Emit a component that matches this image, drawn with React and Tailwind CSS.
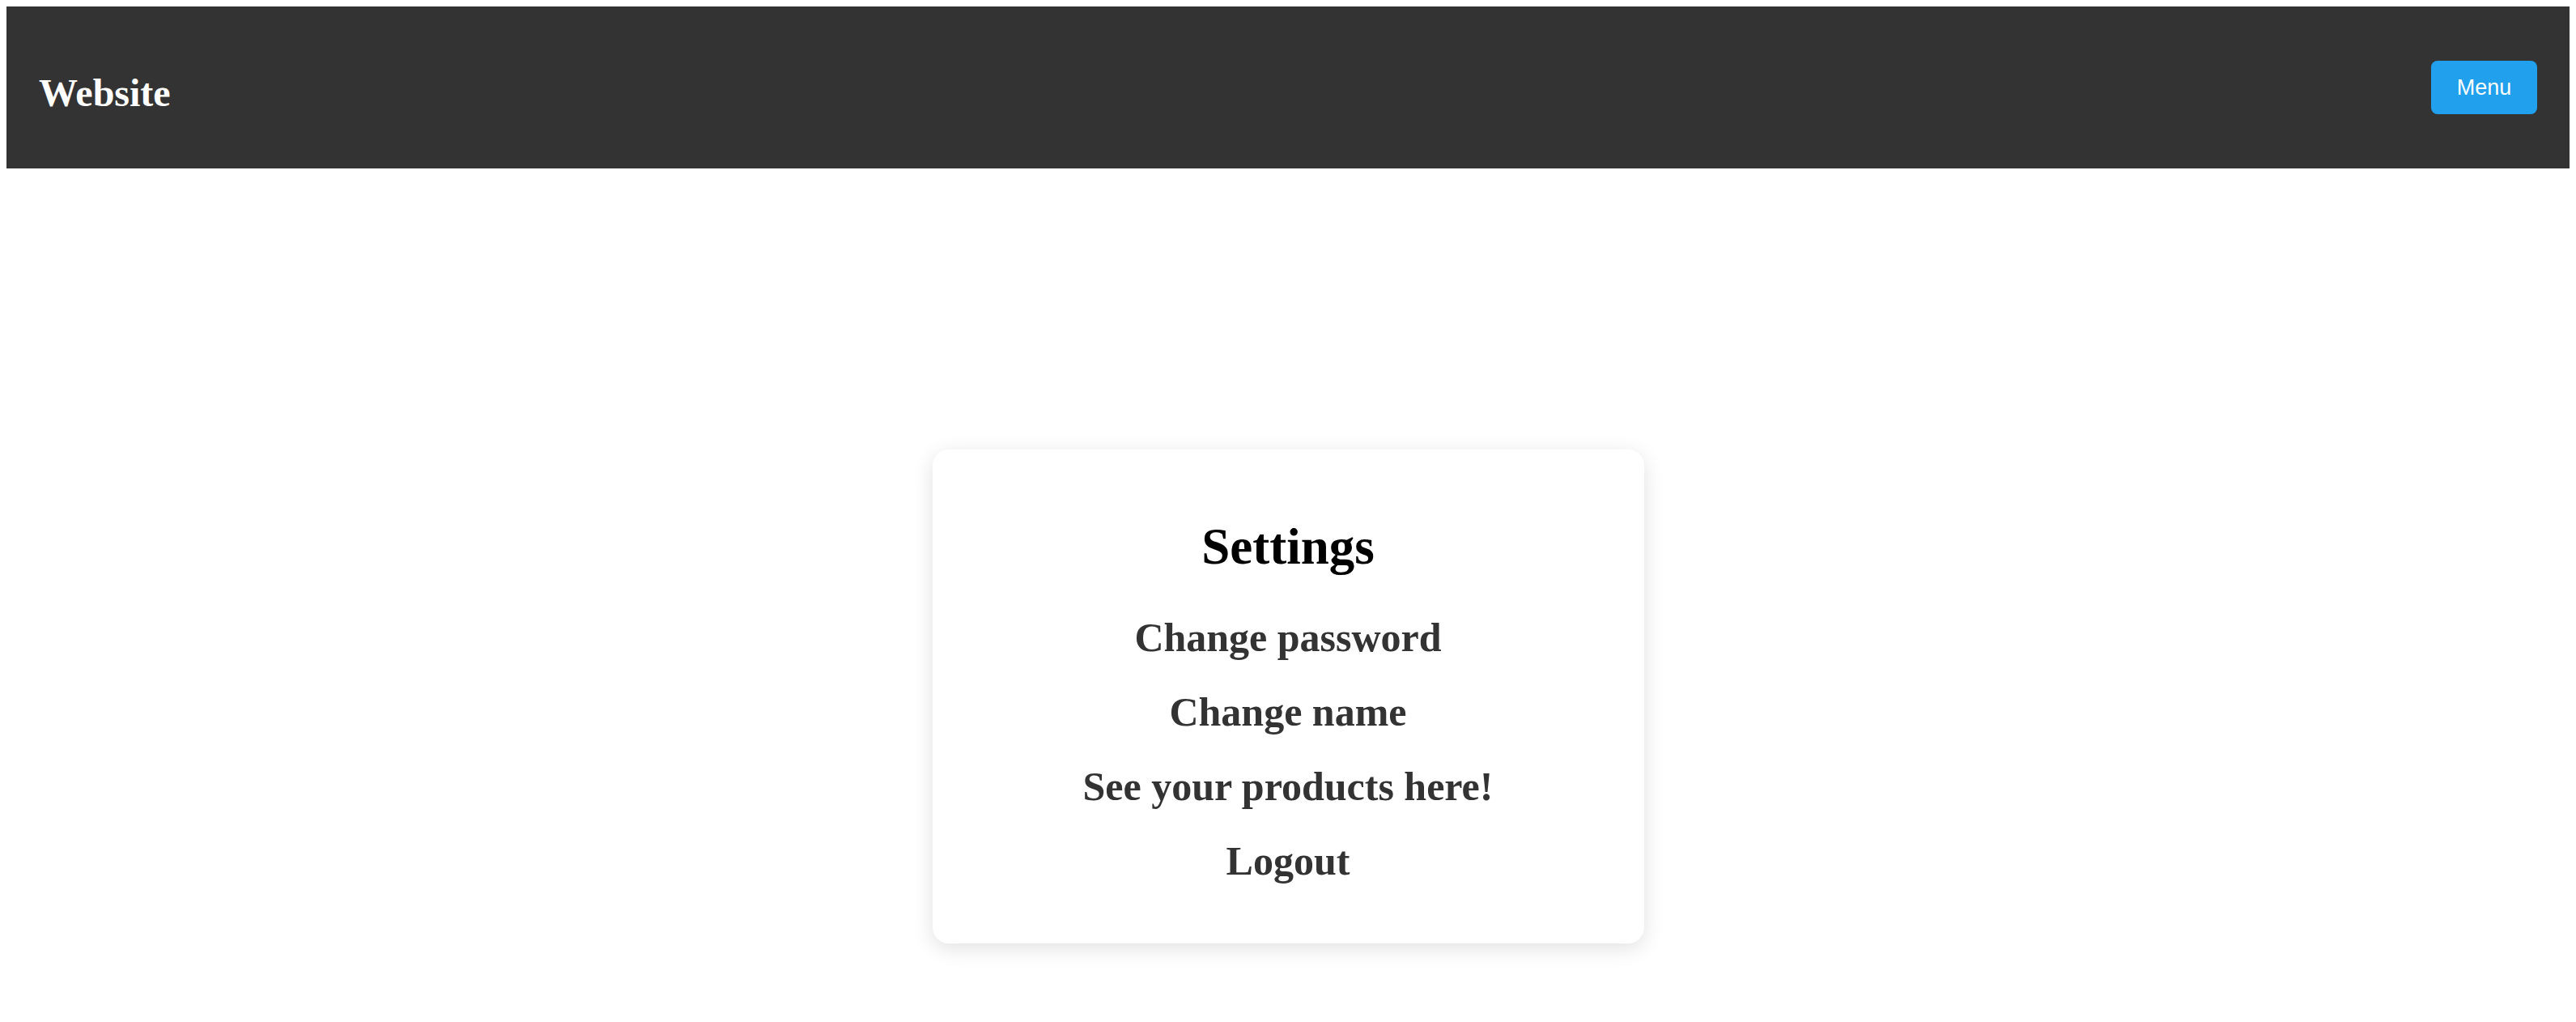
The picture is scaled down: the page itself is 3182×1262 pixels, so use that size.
export default function App() {
  const items = ["Change password", "Change name", "See your products here!", "Logout"];
  return (
    <div className="m-2 min-h-[1246px] bg-white">
      <header className="h-[200px] bg-[#333333] px-[40px] flex items-center justify-between">
        <div className="mt-[12px] text-white font-bold text-[48px] leading-[53px] [font-family:'Liberation_Serif',serif]">
          Website
        </div>
        <button className="w-[131px] h-[66px] rounded-[8px] bg-[#21a0ee] text-white text-[27px] [font-family:'Liberation_Sans',sans-serif] flex items-center justify-center">
          Menu
        </button>
      </header>
      <main className="pt-[347px] flex justify-center">
        <div className="w-[879px] bg-white rounded-[20px] shadow-[0_6px_26px_rgba(0,0,0,0.12)] pt-[85px] pb-[74px] flex flex-col items-center [font-family:'Liberation_Serif',serif] font-bold">
          <h1 className="text-black text-[63px] leading-[70px]">Settings</h1>
          <div className="mt-[49px] flex flex-col items-center gap-[36px]">
            {items.map((t) => (
              <div key={t} className="text-[#333333] text-[50px] leading-[56px] cursor-pointer">
                {t}
              </div>
            ))}
          </div>
        </div>
      </main>
    </div>
  );
}
